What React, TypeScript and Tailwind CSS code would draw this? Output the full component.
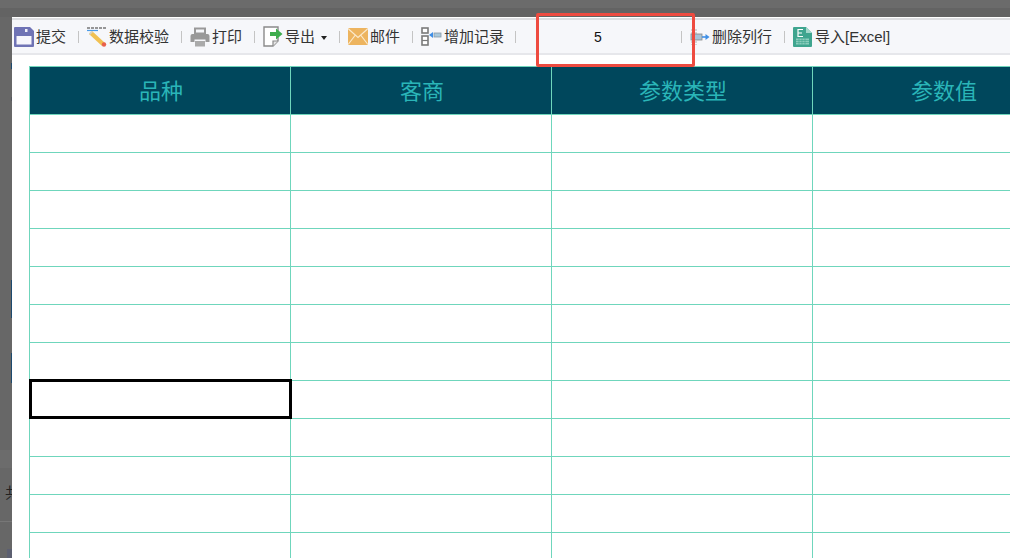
const font = "font-['Liberation_Sans','Noto_Sans_CJK_SC',sans-serif]";

function Sep() {
  return <div className="mr-[8px] ml-[12px] h-[12px] w-px shrink-0 bg-[#c4c4c4]" />;
}

function SaveIcon() {
  return (
    <svg width="20" height="20" viewBox="0 0 20 20" className="shrink-0">
      <path d="M1 0h15l4 4v15a1 1 0 0 1-1 1H1a1 1 0 0 1-1-1V1a1 1 0 0 1 1-1z" fill="#6f73b5" />
      <rect x="2.500" y="9" width="15" height="8.500" fill="#f6f6fc" />
      <rect x="11" y="2" width="2.500" height="3" fill="#f0f0f8" />
    </svg>
  );
}

function CheckIcon() {
  return (
    <svg width="20" height="22" viewBox="0 0 20 22" className="shrink-0">
      <path d="M0 2h3M4 2h3M8 2h3M12 2h3M16 2h3" stroke="#777" strokeWidth="1.4" />
      <path d="M0 4.500h11" stroke="#4a9be8" strokeWidth="1.2" />
      <path d="M5 5l13 12-3 3L2 8z" fill="#f1c152" />
      <path d="M2 8l1-2 2-1 1 1-3 3z" fill="#d8d2c0" />
      <circle cx="17" cy="18.500" r="2.200" fill="#e8604c" />
    </svg>
  );
}

function PrintIcon() {
  return (
    <svg width="20" height="20" viewBox="0 0 20 20" className="shrink-0">
      <path d="M5 1.500h10v5H5z" fill="none" stroke="#999" strokeWidth="2" />
      <path d="M2.500 7h15a2 2 0 0 1 2 2v6h-4v-2.500h-11V15h-4V9a2 2 0 0 1 2-2z" fill="#999" />
      <rect x="5" y="14" width="10" height="5.500" fill="#aaa" />
    </svg>
  );
}

function ExportIcon() {
  return (
    <svg width="20" height="21" viewBox="0 0 20 21" className="shrink-0">
      <path d="M1 1h14v14l-5 5H1z" fill="#fff" stroke="#8a8a8a" strokeWidth="1.4" />
      <path d="M10 20v-5h5" fill="#e6e6e6" stroke="#8a8a8a" strokeWidth="1.2" />
      <path d="M7 6h6V2.500L19.500 8 13 13.500V10H7z" fill="#3ead4e" />
    </svg>
  );
}

function MailIcon() {
  return (
    <svg width="20" height="17" viewBox="0 0 20 17" className="shrink-0">
      <rect width="20" height="17" rx="1.500" fill="#edb45f" />
      <path d="M0.500 1l9.500 8.500 9.500-8.500M0.500 16l6.500-8.500M19.500 16l-6.500-8.500" fill="none" stroke="#fbe9cb" strokeWidth="1.2" />
    </svg>
  );
}

function AddRecordIcon() {
  return (
    <svg width="21" height="19" viewBox="0 0 21 19" className="shrink-0">
      <rect x="1" y="1" width="6" height="5" fill="#fff" stroke="#7a7a7a" strokeWidth="1.6" />
      <rect x="1" y="9" width="6" height="9" fill="#fff" stroke="#7a7a7a" strokeWidth="1.6" />
      <path d="M1 13.500h6" stroke="#7a7a7a" strokeWidth="1.2" />
      <rect x="13" y="6" width="7" height="4" fill="#a9c9dc" stroke="#8a9aa5" strokeWidth="0.8" />
      <path d="M8 8l4-3v6z" fill="#3f8fe6" />
    </svg>
  );
}

function DeleteRowIcon() {
  return (
    <svg width="20" height="18" viewBox="0 0 20 18" className="shrink-0">
      <path d="M2 1v16M6 1v16" stroke="#b3b3b3" strokeWidth="1" strokeDasharray="2 1" />
      <rect x="1" y="6" width="11" height="6" fill="#a9c4d8" stroke="#888" strokeWidth="0.8" />
      <path d="M12 9h4" stroke="#3f8fe6" strokeWidth="1.600" />
      <path d="M15.500 6l4 3-4 3z" fill="#3f8fe6" />
    </svg>
  );
}

function ExcelIcon() {
  return (
    <svg width="20" height="20" viewBox="0 0 20 20" className="shrink-0">
      <path d="M1 0h12l6 6v13a1 1 0 0 1-1 1H1a1 1 0 0 1-1-1V1a1 1 0 0 1 1-1z" fill="#3fa58f" />
      <path d="M13 0l6 6h-6z" fill="#a4d8cb" />
      <path d="M3 11.500h13v6H3z" fill="#8bcdbd" />
      <path d="M3 13.500h13M3 15.500h13M6 11.500v6M9 11.500v6M12 11.500v6" stroke="#3fa58f" strokeWidth="0.6" />
      <path d="M10 2.500H5v7h5M5 6h4" stroke="#fff" strokeWidth="1.200" fill="none" />
    </svg>
  );
}

function ToolItem({ icon, label, caret }: { icon: React.ReactNode; label: string; caret?: boolean }) {
  return (
    <div className="flex shrink-0 items-center gap-[2px] text-[15px] text-[#333]">
      {icon}
      <span className="mt-px">{label}</span>
      {caret && <span className="mt-[3px] ml-[4px] h-0 w-0 border-x-[3.500px] border-t-[4px] border-x-transparent border-t-[#222]" />}
    </div>
  );
}

const columns = ["品种", "客商", "参数类型", "参数值"];
const rows = Array.from({ length: 12 }, (_, i) => i);

export default function App() {
  return (
    <div className={`${font} relative flex h-[558px] w-[1010px] flex-col overflow-hidden bg-[#676767]`}>
      {/* dimmed page top */}
      <div className="h-[8px] shrink-0 bg-[#6b6b6b]" />
      <div className="h-[9px] shrink-0 bg-[#636363]" />

      <div className="flex min-h-0 flex-1">
        {/* page behind the dialog, dimmed */}
        <div className="flex w-[12px] shrink-0 flex-col">
          <div className="mt-[46px] ml-[11px] h-[6px] w-px shrink-0 bg-[#1d4a6e]" />
          <div className="mt-[28px] ml-[11px] h-[4px] w-px shrink-0 bg-[#55585f]" />
          <div className="mt-[179px] ml-[11px] h-[38px] w-px shrink-0 bg-[#1d4a6e]" />
          <div className="mt-[35px] ml-[11px] h-[30px] w-px shrink-0 bg-[#1d4a6e]" />
          <div className="mt-[67px] h-[18px] shrink-0 bg-[#6c6c6c]" />
          <div className="h-[53px] shrink-0 pt-[15px] text-[15px] leading-[20px] text-[#222]">
            <span className="ml-[5px] block w-[7px] overflow-hidden whitespace-nowrap">共</span>
          </div>
          <div className="h-px shrink-0 bg-[#777]" />
          <div className="mt-[27px] ml-[7px] h-[9px] w-[5px] shrink-0 bg-[#5c5f70]" />
        </div>

        <div className="flex min-w-0 flex-1 flex-col border-t border-white bg-white">
          <div className="flex h-[37px] shrink-0 items-center border-y-2 border-t-[#dcdde0] border-b-[#e6e7eb] bg-[#f6f7fa] pl-[2px]">
            <ToolItem icon={<SaveIcon />} label="提交" />
            <Sep />
            <ToolItem icon={<CheckIcon />} label="数据校验" />
            <Sep />
            <ToolItem icon={<PrintIcon />} label="打印" />
            <Sep />
            <ToolItem icon={<ExportIcon />} label="导出" caret />
            <Sep />
            <ToolItem icon={<MailIcon />} label="邮件" />
            <Sep />
            <div className="-mr-px">
              <ToolItem icon={<AddRecordIcon />} label="增加记录" />
            </div>
            <Sep />
            <div className="mt-px w-[145px] shrink-0 pl-[70px] text-[14px] text-[#111]">5</div>
            <Sep />
            <ToolItem icon={<DeleteRowIcon />} label="删除列行" />
            <Sep />
            <ToolItem icon={<ExcelIcon />} label="导入[Excel]" />
          </div>

          <div className="flex-1 pt-[11px] pl-[17px]">
            <table className="w-[1044px] table-fixed border-separate border-spacing-0">
              <thead>
                <tr className="h-[49px] bg-[#00475c]">
                  {columns.map((c) => (
                    <th key={c} className="border-y border-l border-[#6fd6bc] pt-[2px] pl-[2px] text-[22px] font-normal text-[#2ab5b8]">{c}</th>
                  ))}
                </tr>
              </thead>
              <tbody>
                {rows.map((r) => (
                  <tr key={r} className="h-[38px]">
                    {columns.map((c, i) => (
                      <td key={c} className="relative border-b border-l border-[#6fd6bc]">
                        {r === 7 && i === 0 && (
                          <div className="absolute top-[-2px] left-[-1px] z-10 h-[40px] w-[263px] border-[3px] border-black" />
                        )}
                      </td>
                    ))}
                  </tr>
                ))}
              </tbody>
            </table>
          </div>
        </div>
      </div>

      {/* red annotation box over the toolbar */}
      <div className="pointer-events-none absolute top-[13px] left-[536px] z-20 h-[54px] w-[159px] rounded-[2px] border-[3px] border-[#ee4b40]" />
    </div>
  );
}
